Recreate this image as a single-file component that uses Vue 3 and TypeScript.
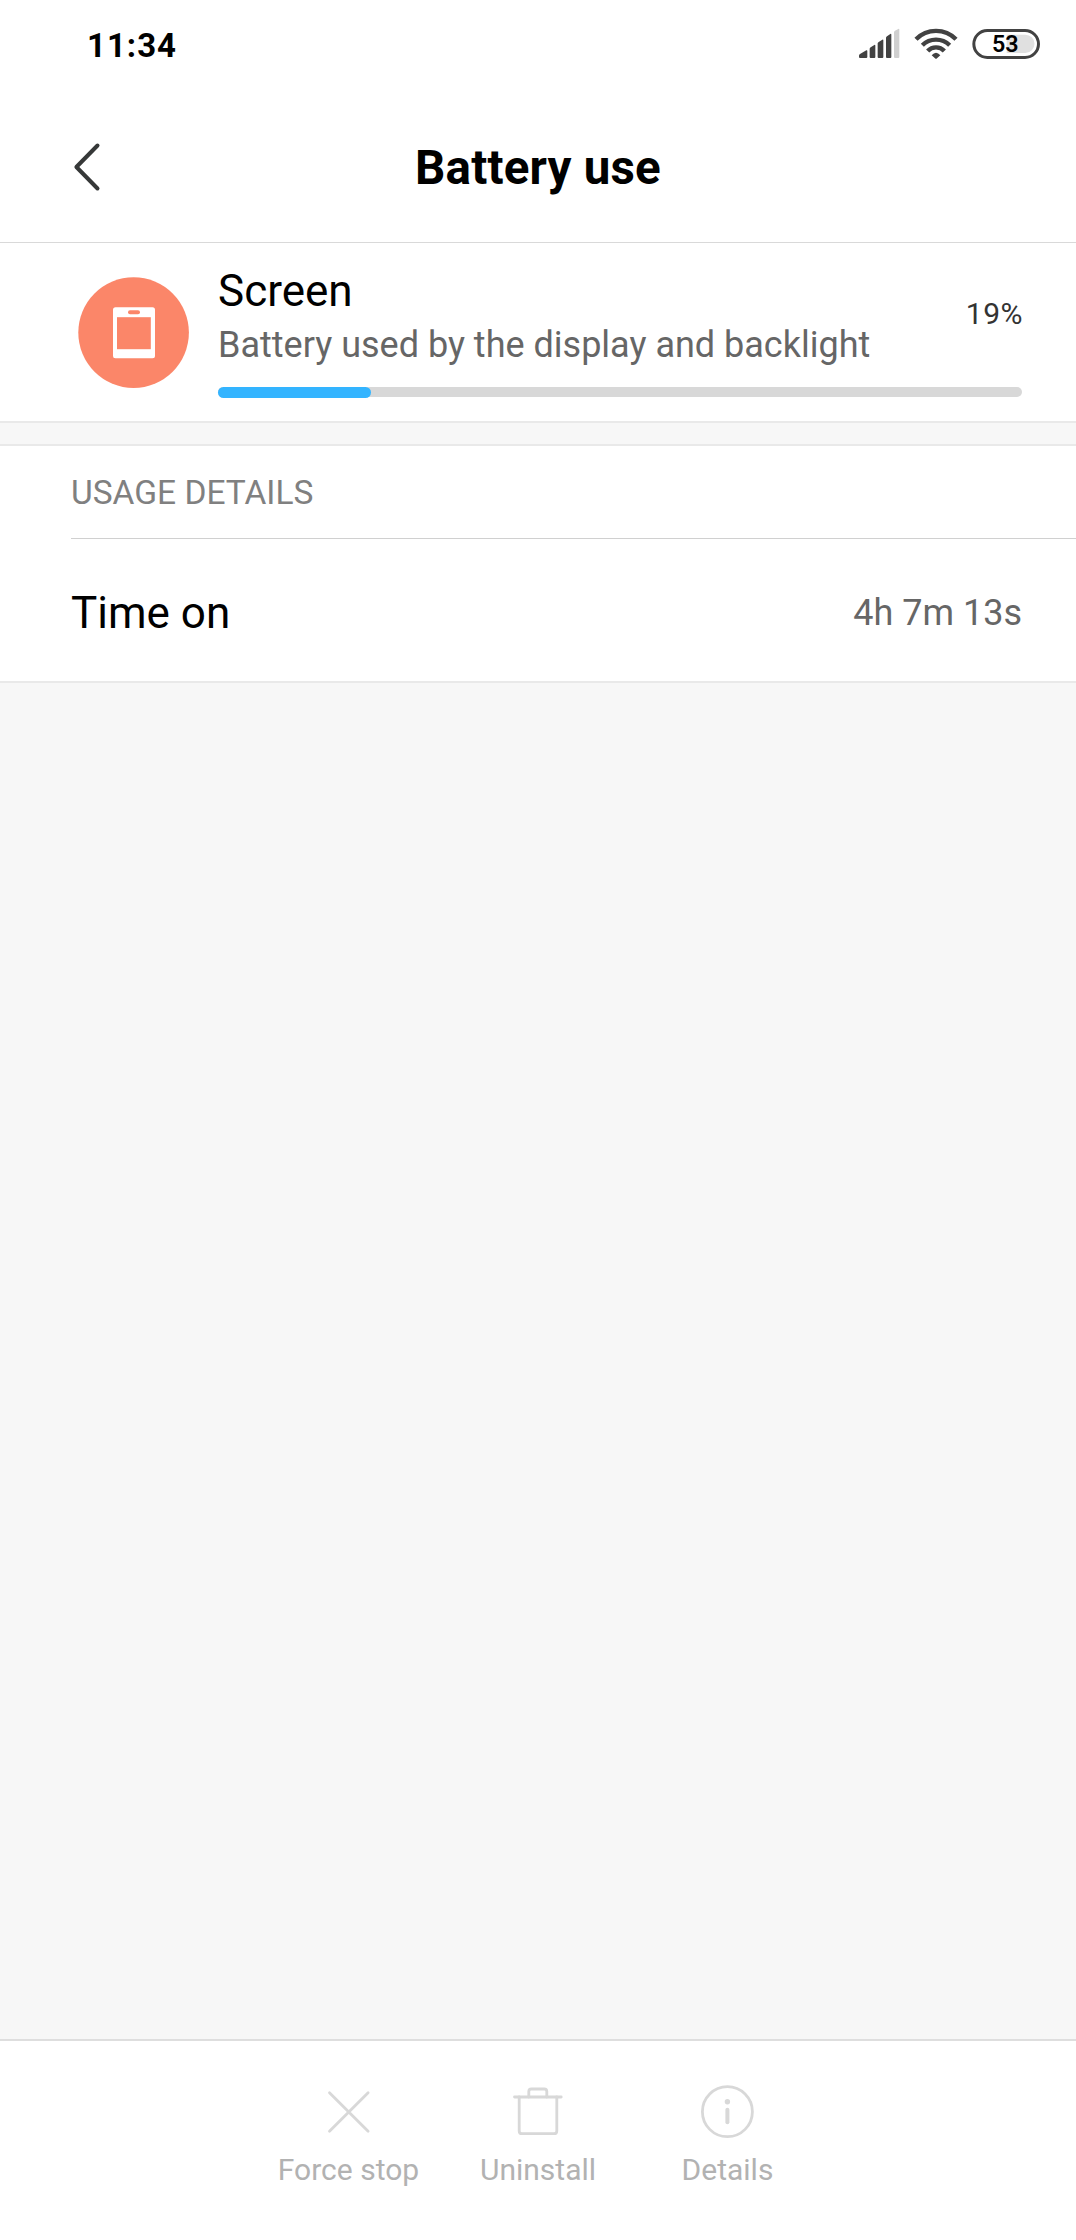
<script setup lang="ts">
interface Action {
  id: 'stop' | 'uninstall' | 'details'
  label: string
}

const batteryLevel = 53
const usagePercent = 19
const actions: Action[] = [
  { id: 'stop', label: 'Force stop' },
  { id: 'uninstall', label: 'Uninstall' },
  { id: 'details', label: 'Details' },
]
</script>

<template>
  <div class="screen">
    <div class="status">
      <span class="clock">11:34</span>
      <div class="indicators">
        <!-- Viewboxes here use three units per pixel -->
        <svg class="signal" viewBox="56 39 123 93">
          <g fill="#424242">
            <path d="M59 117L78 106Q81 105 81 108V126Q81 129 78 129H59Q56 129 56 126V121Q56 119 59 117Z" />
            <path d="M91 97L102 90Q105 88 105 92V126Q105 129 102 129H91Q88 129 88 126V101Q88 99 91 97Z" />
            <path d="M115 81L126 74Q129 72 129 76V126Q129 129 126 129H115Q112 129 112 126V85Q112 83 115 81Z" />
            <path d="M140 64L150 57Q153 55 153 59V126Q153 129 150 129H140Q137 129 137 126V68Q137 66 140 64Z" />
          </g>
          <path fill="#cfcfcf" d="M164 47L174 42Q177 40 177 44V126Q177 129 174 129H164Q161 129 161 126V51Q161 49 164 47Z" />
        </svg>
        <svg class="wifi" viewBox="221 39 132 96">
          <g fill="none" stroke="#424242" stroke-width="13" stroke-linecap="butt">
            <path d="M227 73A84 84 0 0 1 347 73" />
            <path d="M246 91A58 58 0 0 1 328 91" />
            <path d="M262 108A34 34 0 0 1 312 108" />
          </g>
          <path fill="#424242" d="M274 121Q287 105 300 121L290 130Q287 133 284 130Z" />
        </svg>
        <svg class="battery" viewBox="396 39 207 96">
          <rect x="401.5" y="46.5" width="194" height="81" rx="40.5" fill="#fff" stroke="#424242" stroke-width="9" />
          <path fill="#e0e0e0" d="M500 59H556A27 27 0 0 1 556 114H500Z" />
          <text x="496" y="112" text-anchor="middle">{{ batteryLevel }}</text>
        </svg>
      </div>
    </div>

    <header class="titlebar">
      <svg class="back" viewBox="0 0 30 50">
        <path d="M24.5 3.5L3.4 25L24.5 46.5" />
      </svg>
      <h1>Battery use</h1>
    </header>

    <section class="summary">
      <svg class="app-icon" viewBox="0 0 111 111">
        <circle cx="55.6" cy="55.6" r="55.3" fill="#fb8669" />
        <rect x="35" y="30.3" width="42" height="51" rx="2.5" fill="#fff" />
        <rect x="39" y="40.2" width="33.8" height="32" fill="#fb8669" />
        <rect x="50" y="33.2" width="12" height="4" rx="2" fill="#fb8669" />
      </svg>
      <div class="info">
        <div class="heading">
          <div>
            <div class="name">Screen</div>
            <div class="desc">Battery used by the display and backlight</div>
          </div>
          <span class="percent">{{ usagePercent }}%</span>
        </div>
        <div class="track">
          <div class="fill" :style="{ width: usagePercent + '%' }"></div>
        </div>
      </div>
    </section>

    <section class="details">
      <h2>USAGE DETAILS</h2>
      <div class="row">
        <span class="key">Time on</span>
        <span class="value">4h 7m 13s</span>
      </div>
    </section>

    <footer class="actions">
      <div v-for="a in actions" :key="a.id" class="action">
        <svg viewBox="0 0 64 64">
          <path v-if="a.id === 'stop'" d="M12.5 12.7L51.1 51.3M51.1 12.7L12.5 51.3" />
          <g v-else-if="a.id === 'uninstall'">
            <path d="M8.5 17H55.2" />
            <path d="M22.8 17V11.5Q22.8 9 25.3 9H38.3Q40.8 9 40.8 11.5V17" />
            <path d="M13.2 17V50.9Q13.2 53.7 16 53.7H48Q50.8 53.7 50.8 50.9V17" />
          </g>
          <g v-else>
            <circle cx="31.4" cy="31.7" r="25" />
            <circle class="dot" cx="31.4" cy="21.8" r="2.7" />
            <path class="stem" d="M31.4 29.7V42.3" />
          </g>
        </svg>
        <span>{{ a.label }}</span>
      </div>
    </footer>
  </div>
</template>

<style>
body {
  background: #f7f7f7;
}
</style>

<style scoped>
.screen {
  display: flex;
  flex-direction: column;
  box-sizing: border-box;
  width: 1076px;
  height: 2240px;
  overflow: hidden;
  background: #f7f7f7;
  color: #000;
  font-family: Roboto, sans-serif;
}

.status {
  display: flex;
  justify-content: space-between;
  height: 91px;
  padding: 0 35px 0 87px;
  background: #fff;
}

.clock {
  font-size: 33px;
  font-weight: 700;
  line-height: 91px;
  letter-spacing: 1px;
}

.indicators {
  display: flex;
  align-items: flex-start;
  padding-top: 28px;
}

.signal {
  width: 41px;
  height: 31px;
}

.wifi {
  width: 44px;
  height: 32px;
  margin-left: 14px;
}

.battery {
  width: 69px;
  height: 32px;
  margin-left: 14.3px;
}

.battery text {
  font: 600 70px Roboto, sans-serif;
}

.titlebar {
  display: grid;
  grid-template-columns: 76px 1fr 76px;
  align-items: center;
  box-sizing: border-box;
  height: 152px;
  padding-top: 3px;
  border-bottom: 1px solid #d9d9d9;
  background: #fff;
}

.back {
  justify-self: end;
  width: 30px;
  height: 50px;
  margin: 0 -27.3px 3px 0;
  fill: none;
  stroke: #363838;
  stroke-width: 4;
  stroke-linecap: round;
  stroke-linejoin: round;
}

h1 {
  margin: 0;
  font-size: 47.5px;
  font-weight: 700;
  line-height: 60px;
  letter-spacing: 0.2px;
  text-align: center;
}

.summary {
  display: flex;
  align-items: flex-start;
  box-sizing: border-box;
  height: 180px;
  padding: 22px 54px 0 78px;
  border-bottom: 2px solid #e9e9e9;
  background: #fff;
}

.app-icon {
  flex: none;
  width: 111px;
  height: 111px;
  margin-top: 12px;
}

.info {
  flex: 1;
  margin-left: 29px;
}

.heading {
  display: flex;
  justify-content: space-between;
}

.name {
  font-size: 44px;
  line-height: 52px;
}

.desc {
  color: #666;
  font-size: 36px;
  line-height: 56px;
}

.percent {
  margin: 19px -1px 0 0;
  color: #333;
  font-size: 30px;
  line-height: 60px;
  letter-spacing: 0.5px;
}

.track {
  height: 10px;
  margin-top: 14px;
  border-radius: 5px;
  background: #d8d8d8;
}

.fill {
  height: 11px;
  border-radius: 5.5px;
  background: #33b4ff;
}

.details {
  box-sizing: border-box;
  height: 239px;
  margin-top: 21px;
  border-top: 2px solid #e9e9e9;
  border-bottom: 2px solid #e9e9e9;
  background: #fff;
}

h2 {
  margin: 0 0 0 71px;
  padding-top: 1px;
  border-bottom: 1px solid #d0d0d0;
  color: #808080;
  font-size: 33.5px;
  font-weight: 400;
  line-height: 91px;
}

.row {
  display: flex;
  align-items: center;
  justify-content: space-between;
  height: 142px;
  padding: 3px 54px 0 71px;
  line-height: 142px;
}

.key {
  font-size: 44px;
}

.value {
  color: #666;
  font-size: 36px;
}

.actions {
  display: flex;
  justify-content: center;
  box-sizing: border-box;
  height: 201px;
  margin-top: auto;
  padding-top: 39px;
  border-top: 2px solid #dedede;
  background: #fff;
}

.action {
  display: flex;
  flex-direction: column;
  align-items: center;
  width: 189.5px;
  color: #b2b2b2;
  font-size: 30px;
  line-height: 40px;
}

.action svg {
  width: 64px;
  height: 64px;
  margin-bottom: 6px;
  fill: none;
  stroke: #d8d8d8;
  stroke-width: 2.8;
  stroke-linecap: round;
}

.action .dot {
  fill: #d8d8d8;
  stroke: none;
}

.action .stem {
  stroke-width: 4;
}
</style>
